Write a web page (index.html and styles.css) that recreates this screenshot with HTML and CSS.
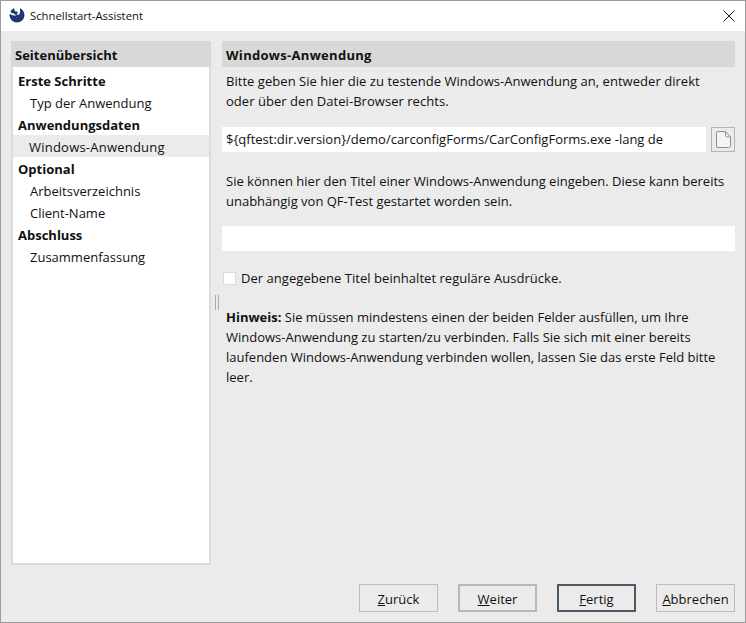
FILE: index.html
```html
<!DOCTYPE html>
<html lang="de">
<head>
<meta charset="utf-8">
<title>Schnellstart-Assistent</title>
<link rel="stylesheet" href="styles.css">
</head>
<body>
<div class="window">
  <header class="titlebar">
    <div class="title-left">
      <svg class="logo" width="16" height="16" viewBox="0 0 16 16">
        <circle cx="8" cy="8" r="7.5" fill="#1d3a6e"/>
        <path d="M4.500 0h6.500v5c0 2-1.500 3.500-3.500 3 1-.9 1.300-2.200 1-3.800-.9.800-2.500.3-3-.8.400-1.200-.3-2.300-1-2.400zM0 4.500h1.500c.4 1.200 1.500 2 3 1.800.7.900 1.500 1.400 3 1.700-2.500 1-5 .5-6.500-1.200l-1-.3z" fill="#fff"/>
      </svg>
      <span>Schnellstart-Assistent</span>
    </div>
    <svg class="close" width="12" height="12" viewBox="0 0 12 12"><path d="M.5.5l11 11M11.500.5l-11 11" stroke="#111" fill="none"/></svg>
  </header>
  <div class="content">
    <main class="split">
      <aside class="sidebar">
        <h2 class="section-head">Seitenübersicht</h2>
        <ul class="tree">
          <li class="group">Erste Schritte</li>
          <li class="leaf">Typ der Anwendung</li>
          <li class="group">Anwendungsdaten</li>
          <li class="leaf selected">Windows-Anwendung</li>
          <li class="group">Optional</li>
          <li class="leaf">Arbeitsverzeichnis</li>
          <li class="leaf">Client-Name</li>
          <li class="group">Abschluss</li>
          <li class="leaf">Zusammenfassung</li>
        </ul>
      </aside>
      <div class="divider"><span class="grip"></span></div>
      <section class="panel">
        <h2 class="section-head main-head">Windows-Anwendung</h2>
        <p class="text intro">Bitte geben Sie hier die zu testende Windows-Anwendung an, entweder direkt oder über den Datei-Browser rechts.</p>
        <div class="file-row">
          <div class="field">${qftest:dir.version}/demo/carconfigForms/CarConfigForms.exe -lang de</div>
          <button class="file-btn" type="button" aria-label="Datei">
            <svg width="15" height="17" viewBox="0 0 15 17"><path d="M2 .5h7.500l5 5.500v8.500a2 2 0 0 1-2 2h-10.500a1.500 1.500 0 0 1-1.500-1.500v-13a1.500 1.500 0 0 1 1.500-1.500z" fill="#f4f4f4" stroke="#8f8f8f"/><path d="M9.500.5v3.500a2 2 0 0 0 2 2h3" fill="none" stroke="#8f8f8f"/></svg>
          </button>
        </div>
        <p class="text second">Sie können hier den Titel einer Windows-Anwendung eingeben. Diese kann bereits unabhängig von QF-Test gestartet worden sein.</p>
        <div class="field title-field"></div>
        <label class="check"><span class="box"></span><span>Der angegebene Titel beinhaltet reguläre Ausdrücke.</span></label>
        <p class="text hint"><b>Hinweis:</b> Sie müssen mindestens einen der beiden Felder ausfüllen, um Ihre Windows-Anwendung zu starten/zu verbinden. Falls Sie sich mit einer bereits laufenden Windows-Anwendung verbinden wollen, lassen Sie das erste Feld bitte leer.</p>
      </section>
    </main>
    <footer class="buttons">
      <button class="btn" type="button"><u>Z</u>urück</button>
      <button class="btn btn-hover" type="button"><u>W</u>eiter</button>
      <button class="btn btn-default" type="button"><u>F</u>ertig</button>
      <button class="btn" type="button"><u>A</u>bbrechen</button>
    </footer>
  </div>
</div>
</body>
</html>
```
FILE: styles.css
```css
* { box-sizing: border-box; }
html, body { margin: 0; padding: 0; }
body { width: 746px; height: 623px; overflow: hidden; font-family: "Open Sans", "Noto Sans", sans-serif; font-size: 13px; color: #111; }
.window { width: 746px; height: 623px; border: 1px solid #9c9c9c; display: flex; flex-direction: column; background: #ebebeb; }
.titlebar { height: 30px; background: #fff; display: flex; align-items: center; justify-content: space-between; padding: 0 10px 2px 8px; font-size: 11.3px; flex: none; }
.title-left { display: flex; align-items: center; gap: 5px; }
.logo { display: block; }
.close { display: block; margin-top: 2px; }
.content { flex: 1; display: flex; flex-direction: column; padding: 10px; }
.split { display: flex; height: 524px; }
.sidebar { width: 200px; height: 524px; flex: none; display: flex; flex-direction: column; background: #dcdcdc; }
.section-head { margin: 0; height: 26px; line-height: 28px; background: #d8d8d8; font-size: 13px; font-weight: 700; padding: 0 4px; flex: none; }
.tree { list-style: none; margin: 0 2px 2px; padding: 2px 0 0; background: #fff; flex: 1; border-top: 0; }
.tree li { height: 22px; line-height: 24px; }
.group { font-weight: 700; padding-left: 5px; }
.leaf { padding-left: 17px; }
.selected { background: #ebebeb; padding-left: 16px; letter-spacing: .22px; }
.divider { width: 11px; flex: none; display: flex; align-items: center; justify-content: center; }
.grip { width: 4px; height: 15px; margin-bottom: 2px; border-left: 1px solid #aaa; border-right: 1px solid #aaa; }
.panel { flex: 1; min-width: 0; display: flex; flex-direction: column; }
.main-head { padding-left: 4px; letter-spacing: .3px; }
.text { margin: 0; line-height: 20px; padding: 0 4px; }
.intro { margin-top: 4px; padding-right: 20px; letter-spacing: .04px; }
.file-row { display: flex; margin-top: 16px; gap: 5px; }
.field { height: 25px; line-height: 25px; background: #fff; padding: 0 4px; flex: 1; white-space: nowrap; }
.file-btn { width: 24px; height: 25px; padding: 0; background: #ebebeb; border: 1px solid #b4b4b4; display: flex; align-items: center; justify-content: center; }
.file-btn svg { display: block; }
.second { margin-top: 19px; }
.title-field { flex: none; margin-top: 15px; }
.check { display: flex; align-items: center; gap: 5px; margin-top: 17px; height: 20px; padding-left: 1px; letter-spacing: .04px; }
.box { width: 13px; height: 13px; background: #fff; border: 1px solid #dcdcdc; }
.hint { margin-top: 19px; }
.buttons { display: flex; justify-content: flex-end; gap: 20px; margin-top: 19px; }
.btn { width: 79px; height: 28px; padding: 2px 0 0; background: #ebebeb; border: 1px solid #bcbcbc; font: inherit; color: #111; }
.btn-hover { border: 2px solid #b8b8b8; }
.btn-default { border: 2px solid #4b5866; }
```
